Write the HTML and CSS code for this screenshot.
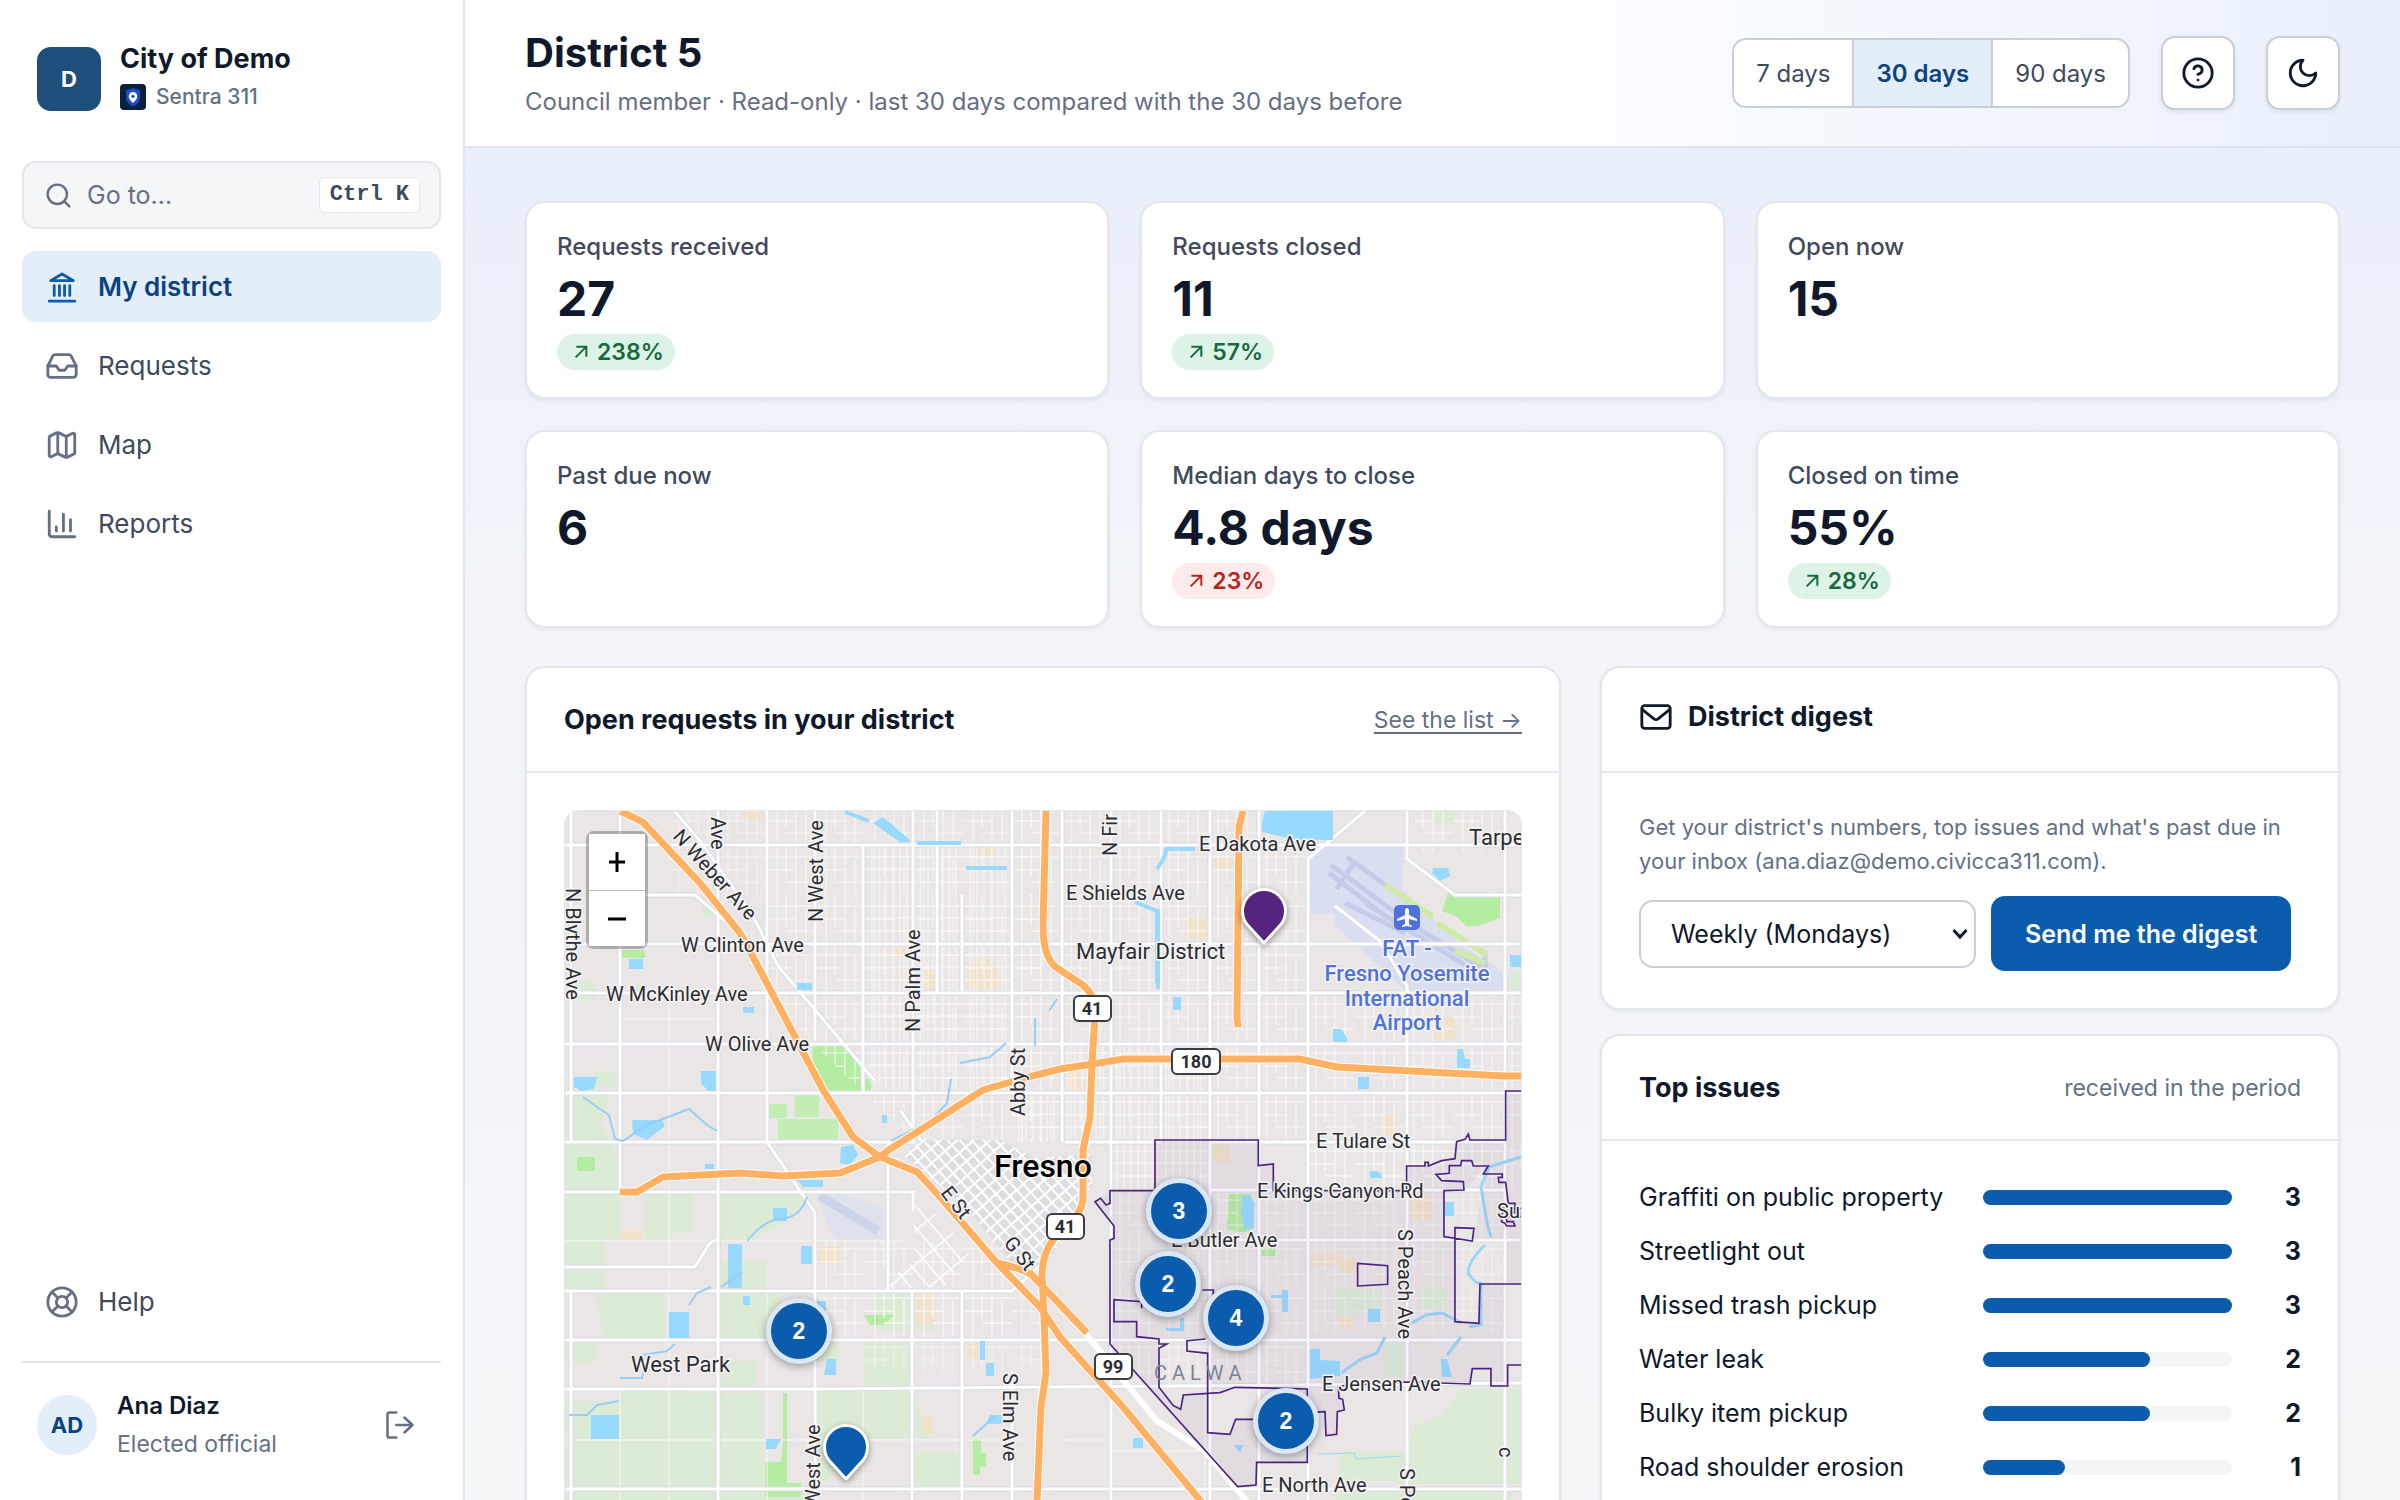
FILE: index.html
```html
<!DOCTYPE html>
<html lang="en">
<head>
<meta charset="utf-8">
<title>District 5 – Sentra 311</title>
<meta name="viewport" content="width=device-width, initial-scale=1">
<link rel="stylesheet" href="styles.css">
</head>
<body>
<div class="app">
  <aside class="sidebar">
    <div class="brand">
      <span class="brand-logo">D</span>
      <div class="brand-text">
        <strong class="brand-name">City of Demo</strong>
        <span class="brand-product">
          <svg class="brand-mark" viewBox="0 0 26 26" aria-hidden="true"><rect width="26" height="26" rx="4" fill="#0b1f3f"/><path d="M13 4l7 2.500v6.500c0 4.500-3 7.500-7 9.500-4-2-7-5-7-9.500V6.500z" fill="#1a4fc0"/><path d="M13 8a4.300 4.300 0 0 0-4.300 4.300c0 3.200 4.300 6.700 4.300 6.700s4.300-3.500 4.300-6.700A4.300 4.300 0 0 0 13 8z" fill="#fff"/><circle cx="13" cy="12.300" r="1.600" fill="#1a4fc0"/></svg>
          Sentra 311
        </span>
      </div>
    </div>

    <button class="goto" type="button">
      <svg class="goto-icon" viewBox="0 0 24 24" aria-hidden="true"><circle cx="11" cy="11" r="8"/><path d="m21 21-4.300-4.300"/></svg>
      <span>Go to...</span>
      <kbd>Ctrl K</kbd>
    </button>

    <nav class="nav" aria-label="Main">
      <a class="nav-item is-active" href="#district" aria-current="page">
        <svg viewBox="0 0 24 24" aria-hidden="true"><path d="M3 22h18M6.500 18v-7M10.200 18v-7M13.800 18v-7M17.500 18v-7M12 2.800 20 7.500H4z"/></svg>
        My district
      </a>
      <a class="nav-item" href="#requests">
        <svg viewBox="0 0 24 24" aria-hidden="true"><path d="M22 12h-6l-2 3h-4l-2-3H2"/><path d="M5.450 5.110 2 12v6a2 2 0 0 0 2 2h16a2 2 0 0 0 2-2v-6l-3.450-6.890A2 2 0 0 0 16.760 4H7.240a2 2 0 0 0-1.790 1.110z"/></svg>
        Requests
      </a>
      <a class="nav-item" href="#map">
        <svg viewBox="0 0 24 24" aria-hidden="true"><path d="M14.106 5.553a2 2 0 0 0 1.788 0l3.659-1.830A1 1 0 0 1 21 4.619v12.764a1 1 0 0 1-.553.894l-4.553 2.277a2 2 0 0 1-1.788 0l-4.212-2.106a2 2 0 0 0-1.788 0l-3.659 1.830A1 1 0 0 1 3 19.381V6.618a1 1 0 0 1 .553-.894l4.553-2.277a2 2 0 0 1 1.788 0zM15 5.764v15M9 3.236v15"/></svg>
        Map
      </a>
      <a class="nav-item" href="#reports">
        <svg viewBox="0 0 24 24" aria-hidden="true"><path d="M3 3v16a2 2 0 0 0 2 2h16M8 17v-3M13 17V5M18 17V9"/></svg>
        Reports
      </a>
    </nav>

    <div class="sidebar-foot">
      <a class="nav-item" href="#help">
        <svg viewBox="0 0 24 24" aria-hidden="true"><circle cx="12" cy="12" r="10"/><circle cx="12" cy="12" r="4"/><path d="m4.930 4.930 4.240 4.240M14.830 9.170l4.240-4.240M14.830 14.830l4.240 4.240M9.170 14.830l-4.240 4.240"/></svg>
        Help
      </a>
      <div class="user">
        <span class="avatar">AD</span>
        <div class="user-text">
          <span class="user-name">Ana Diaz</span>
          <span class="user-role">Elected official</span>
        </div>
        <button class="logout" type="button" aria-label="Sign out">
          <svg viewBox="0 0 24 24" aria-hidden="true"><path d="M9 2H3.500A1.500 1.500 0 0 0 2 3.500v17A1.500 1.500 0 0 0 3.500 22H9M9 12h13M15.500 6l6.500 6-6.500 6"/></svg>
        </button>
      </div>
    </div>
  </aside>

  <div class="main">
    <header class="topbar">
      <div>
        <h1>District 5</h1>
        <p class="subtitle">Council member · Read-only · last 30 days compared with the 30 days before</p>
      </div>
      <div class="tools">
        <div class="segmented" role="group" aria-label="Period">
          <button type="button">7 days</button>
          <button type="button" class="is-on" aria-pressed="true">30 days</button>
          <button type="button">90 days</button>
        </div>
        <button class="icon-btn" type="button" aria-label="Help">
          <svg viewBox="0 0 24 24" aria-hidden="true"><circle cx="12" cy="12" r="10"/><path d="M9.090 9a3 3 0 0 1 5.830 1c0 2-3 3-3 3M12 17h.010"/></svg>
        </button>
        <button class="icon-btn" type="button" aria-label="Dark mode">
          <svg viewBox="0 0 24 24" aria-hidden="true"><path d="M12 3a6 6 0 0 0 9 9 9 9 0 1 1-9-9Z"/></svg>
        </button>
      </div>
    </header>

    <main class="content">
      <section class="stats" aria-label="Key numbers">
        <article class="card stat"><h2>Requests received</h2><p class="value">27</p><span class="trend good"><svg viewBox="0 0 24 24" aria-hidden="true"><path d="M5 4h15v15M20 4 4 20"/></svg>238%</span></article>
        <article class="card stat"><h2>Requests closed</h2><p class="value">11</p><span class="trend good"><svg viewBox="0 0 24 24" aria-hidden="true"><path d="M5 4h15v15M20 4 4 20"/></svg>57%</span></article>
        <article class="card stat"><h2>Open now</h2><p class="value">15</p></article>
        <article class="card stat"><h2>Past due now</h2><p class="value">6</p></article>
        <article class="card stat"><h2>Median days to close</h2><p class="value">4.8 days</p><span class="trend bad"><svg viewBox="0 0 24 24" aria-hidden="true"><path d="M5 4h15v15M20 4 4 20"/></svg>23%</span></article>
        <article class="card stat"><h2>Closed on time</h2><p class="value">55%</p><span class="trend good"><svg viewBox="0 0 24 24" aria-hidden="true"><path d="M5 4h15v15M20 4 4 20"/></svg>28%</span></article>
      </section>

      <div class="columns">
        <section class="card panel">
          <header class="panel-head">
            <h2>Open requests in your district</h2>
            <a class="more" href="#list">See the list →</a>
          </header>
          <div class="panel-body">
            <div class="map">
              <svg class="map-art" viewBox="0 0 956 760" preserveAspectRatio="xMinYMin slice" role="img" aria-label="Street map of Fresno">
                <defs>
                  <pattern id="blocks" width="49" height="49" patternUnits="userSpaceOnUse" x="6" y="34">
                    <path d="M10 0V49M19 0V32M29 0V49M39 14V49M0 12H49M0 25H29M19 37H49" class="lane"/>
                  </pattern>
                  <pattern id="dense" width="49" height="49" patternUnits="userSpaceOnUse" x="6" y="34">
                    <path d="M7 0V49M14 0V49M21 0V49M28 0V49M35 0V49M42 0V49M0 12H49M0 24H49M0 37H49" class="lane"/>
                  </pattern>
                  <pattern id="downtown" width="9" height="11" patternUnits="userSpaceOnUse" patternTransform="rotate(-42)">
                    <rect width="9" height="11" fill="#dedee2"/><path d="M0 0H9M0 0V11" stroke="#fff" stroke-width="4" fill="none"/>
                  </pattern>
                  <pattern id="southwest" width="14" height="26" patternUnits="userSpaceOnUse" patternTransform="rotate(-40)">
                    <path d="M0 0H14M0 0V26" stroke="#fff" stroke-width="3" fill="none"/>
                  </pattern>
                </defs>
                <rect width="956" height="760" fill="#e9e6e5"/>

                <!-- farmland and parks -->
                <g fill="#dcebd6">
                  <path d="M0 282h46l-10 30 20 44 0 26H0zM0 382h55v48H0zM80 382h48v40h-20v7H80zM155 382h92l-28 30-32 16h-32zM0 430h40v48H0zM153 450h48v30h-48zM30 482h70v46H40zM155 482h60v46h-60zM0 532h30v20H0zM156 550h34v28h-34zM0 590h55v38H0zM56 580h60v48H56zM100 582h98v94h-98zM0 630h98v48H0zM250 580h98l16 48h-60l-50 48h-4zM350 640h50v38h-50zM0 680h250v80H0zM310 480h60v40h-60zM300 530h45v46h-45zM255 530h18v20h-18z"/>
                  <path d="M767 478h50v25h-50zM818 532h21v34h-21zM856 478h25v20h-25zM895 578h61v95H830l20-60 30-10zM855 640h80v30H775v-30zM767 680h180v80H820z"/>
                  <path d="M10 170h20v20H10zM137 92h18v14h-18zM72 172h8v18h-8zM30 260h20v16H30zM945 160h11v22h-11zM870 0h20v14h-20z"/>
                </g>
                <g fill="#b4eda2">
                  <path d="M57 139h23v8H57zM248 235h34l26 40-3 5h-42l-16-25zM12 346h18v14H12zM299 504h30l-10 10h-14zM218 582h4v90h14v14h-36v-35h16l2-20zM408 628h8v14h5v14h-6v8h-7z"/>
                  <path d="M883 82h52v25l-22 8-12 0-10-10-14-5zM664 383h22v38h-14l-10-3zM697 437h14v8h-16z"/>
                </g>
                <g fill="#c4edb4"><path d="M204 293h18v14h-18zM230 284h24v22h-24zM213 308h60v20h-60z"/></g>
                <g fill="#f0e2cb">
                  <path d="M178 1h22v7h-22zM412 35h18v10h-18zM405 155l15-10 12 12 5 20-35 1zM358 159h12v20h-12zM327 137h14v9h-14zM56 419h22v10H56zM252 435h23v18h-23zM351 482h20v32h-20zM402 532h12v18h-12zM358 605h10v18h-10z"/>
                  <path d="M649 46h19v12h-19zM621 108h21v20h-21zM868 206h22v22h-22zM502 260h14v22h-14zM647 332h18v20h-18zM746 443h30v12h-30zM776 448h16v14h-16zM846 383h22v26h-22zM775 505h14v14h-14zM848 526h16v8h-16zM818 305h12v20h-12z"/>
                </g>

                <!-- airports -->
                <path d="M746 36h92v44l60 55 46 30v14H840l-70-64v-12h-24z" fill="#d9def1"/>
                <path d="M250 383l22-1 46 14v32h-48z" fill="#dfe2ec"/>
                <g stroke="#c4cce9" stroke-width="5" fill="none"><path d="M766 54l84 62 66 40M782 46l74 54M764 62l60 46M780 92l60 30M790 50l-18 28M800 92l100 62M920 140v18"/><path d="M255 385l58 35" stroke-width="9" stroke="#cbd4e8"/></g>
                <g stroke="#cfeaa9" stroke-width="6" fill="none"><path d="M820 74l48 32M872 112l50 32M890 140l30 12"/></g>

                <!-- street grid -->
                <path d="M202 0H480V331H350L250 235 202 182z" fill="url(#blocks)"/>
                <path d="M300 34H447V282H300z" fill="url(#dense)"/>
                <path d="M447 0H743V331H447zM743 182H956V380H743zM850 0H940V40H850z" fill="url(#blocks)"/>
                <path d="M495 233H645V331H495zM447 282H497V331H447z" fill="url(#dense)"/>
                <path d="M546 331H645V380H546z" fill="url(#dense)"/>
                <path d="M546 380H743V578H546zM743 331H940V520H743z" fill="url(#blocks)" opacity=".7"/>
                <path d="M250 430H450V530H250z" fill="url(#blocks)"/>
                <path d="M104 0H202V84H104zM6 84H55V133H6zM300 480H480V560H300z" fill="url(#blocks)" opacity=".7"/>
                <path d="M55 578H55V760M104 182V760M202 480V760M298 578V760M640 578V760M55 208H153M0 430H340M0 629H460M546 640H640M500 629H546" class="lane"/>
                <path d="M355 329h78l38 18 56-4 0 30-50 90-26-6-50-60-62-52z" fill="url(#downtown)"/>
                <path d="M346 380l60 60-26 35-55 4-4-10 30-20z" fill="url(#southwest)"/>

                <g class="street-case"><path id="streets" d="M6 0V331M55 0V380M153 0V133M153 133V760M202 0V331L250 402V480M250 0V230M250 480V760M298 34V282M348 0V330M372 0V182M397 180V84M447 0V282M0 34H956M55 84H130L160 110M0 133H956M0 182H956M0 233H956M0 282H956M0 331H350M0 381H350M0 480H447L480 450M0 529H956M0 578H260M260 578L956 572M0 678H956M323 331V480M348 380V400M347 480V760M397 480V760M447 560V760M497 0V331M546 0V760M596 0V331M645 0V760M694 0V760M743 48V760M842 0V48L890 84H956M842 182V760M940 0V760M645 379H940M645 429H956M645 331H940M770 95L815 130 842 175 842 230M110 1 135 30 188 105 213 155 310 270M336 300L356 330M6 480V760M0 456H130L145 432 153 428M743 48L800 0M596 331H500M940 282V480"/></g>
                <use href="#streets" class="street"/>
                <path d="M520 522 592 610 640 640 740 760" fill="none" stroke="#fff" stroke-width="6"/>

                <!-- water -->
                <g fill="#98daff">
                  <path d="M308 12l10-6 28 24-10 2zM64 148h14v10H64zM232 172h15v7h-15zM178 196h11v6h-11zM9 266h23l-3 12-12 2-8-4zM136 260h15v20h-8l-7-8zM67 309h30l3 6-18 14-14-6zM276 336l12-2 5 10-8 10-10-2zM232 369h26v7h-20zM208 397h14v13h-14zM163 433h14v44h-14zM236 435h11v18h-11zM104 501h20v26h-20zM178 485h7v9h-7zM26 604h28v24H26zM201 628h15l-5 10h-10zM262 548h9v16h-12zM415 530h5v19h-5zM421 552h8v13h-8zM425 604l12 0v9h-16zM317 304h5v8h-5zM140 353h9v5h-9zM252 490h9v10h-9z"/>
                  <path d="M700 0h68v29h-37l-34-8 0-10zM868 57l15 0 2 8-10 5-8-8zM608 186h8v13h-8zM768 218h8l6 9v4h-14zM892 238h6l2 10h5v9h-13zM793 266h11v12h-11zM945 144h11v12h-11zM677 385h8l4 6v26l-9 2-4-16zM805 360h8l4 4v3h-12zM880 391h9v14h-9zM717 479h6v22h-6zM706 484h12v3h-12zM803 498h12v13h-12zM745 538l10 0 0 11 20 1v15l-30 3zM876 548l6 0 5 18h-10zM669 634h9l-3 8zM568 627h10v10h-10zM601 517h14v-10h4v13h-18z"/>
                </g>
                <g fill="none" stroke="#98daff" stroke-width="4"><path d="M280 1l24 9M352 32h44M401 57h41M592 58q12-18 8-20h30M570 91l22 9V172M593 98V178"/></g>
                <g fill="none" stroke="#98cdf5" stroke-width="2"><path d="M18 286l14 10 12 8 6 24 8 2 24-16 42-16 18 16 10 6M326 330l40-20 16-18 4-24M395 252l30-6 16-14M470 235v-28M484 200l8-12M182 430q18-22 34-22 20-2 26-22M156 476l20-14M124 494l8-12 14-6M78 544l24-4 8-7M55 567h22l2-8M4 604h18l10-10 22-4M408 625l22-20"/></g>
                <g fill="none" stroke="#9ad6f8" stroke-width="3"><path d="M956 346l-32 10-8 20 6 36 4 14M920 434q-20 20-16 30l8 8 4 0v42l-12 2M847 512l14-8 16-2 20 10M776 562l20-14 16-6 8-16M896 526l-14 18"/><path d="M753 643l36-1 2 6 46-3" stroke-width="1"/></g>

                <!-- highways -->
                <g class="highway-case"><path id="hwy" d="M55 0 78 11 135 72 175 122 188 146 228 222 258 279 288 326 315 346 352 361 375 386 432 452 475 496 495 526 558 596 692 758M55 381h17l26-15 77-4 43 3 57-3 40-16 10-8 40-25 53-34 57-16 20-5 33-5 30-5H735l37 8 166 9h18M481 0 478 115Q478 150 495 159L518 174Q532 186 530 205L527 252 525 306 518 339V389Q516 402 505 411L488 429Q478 442 477 462L479 506 481 562 476 596 472 689V760M678 0 674 16 672 206 673 216M432 452Q452 456 466 463L522 522"/></g>
                <use href="#hwy" class="highway"/>

                <!-- district boundary -->
                <g transform="translate(475 329) scale(.3333)">
                  <path fill="#6b2b90" fill-opacity=".05" fill-rule="evenodd" d="M345 0H655V77L700 72V152H1100V78H1205L1245 56 1250 5 1397 0V-147H1445V432H1320L1317 550 1245 545V263L1212 290V152L1272 150 1345 78 1300 300 1400 300V675H1403V738H1353V686H1297L1290 732 1100 726 895 738 913 810 892 815 890 883 858 887 855 815 802 817V967H650L648 1035 593 1040 210 612V300L222 258 165 185 210 152H345zM357 597H500L503 878 570 883 587 838H700L800 747 585 742 430 765 422 808 357 742z"/>
                  <path class="boundary" d="M1445-147H1397V0H1290L1285-18 1275-2 1250 5 1245 56 1205 62 1165 78V67H1155V78H1100V152H700V72L655 77V0H345V152H210V190L198 195 182 175 165 185 222 258V295L210 300V612L593 1040 648 1035 650 967H802V747L585 742 540 758 430 765 422 808 400 797 357 742V625L380 612H357V597L290 590V545H222V479L305 485V505M487 450H520V480M497 597L441 602V633L503 640V878L570 883 587 838H660M820 817L855 815 858 887 890 883 892 815 913 810 908 778 897 775 895 738 1100 726 1290 732 1297 686H1353V738H1403V675H1445M1445 432H1320L1317 550 1245 545V263L1302 265 1297 303 1212 290V152L1272 150 1270 125 1205 122 1188 103 1228 100V77H1262L1265 62H1295L1300 78H1345L1330 102H1387V112H1375L1377 127H1397L1405 190H1425V218H1385V245L1395 250 1400 258H1425L1420 245H1400V205M1385 205H1445V230H1385M953 370L1043 377V433L953 438z"/>
                </g>

                <!-- labels -->
                <g class="label">
                  <text x="116" y="141">W Clinton Ave</text>
                  <text x="41" y="190">W McKinley Ave</text>
                  <text x="140" y="240">W Olive Ave</text>
                  <text x="634" y="40">E Dakota Ave</text>
                  <text x="501" y="89">E Shields Ave</text>
                  <text x="751" y="337">E Tulare St</text>
                  <text x="692" y="387">E Kings Canyon Rd</text>
                  <text x="606" y="436">E Butler Ave</text>
                  <text x="757" y="580">E Jensen Ave</text>
                  <text x="697" y="681">E North Ave</text>
                  <text transform="translate(146 6) rotate(90)">Ave</text>
                  <text transform="translate(107 26) rotate(48)">N Weber Ave</text>
                  <text transform="translate(258 111) rotate(-90)">N West Ave</text>
                  <text transform="translate(355 221) rotate(-90)">N Palm Ave</text>
                  <text transform="translate(460 305) rotate(-90)">Abby St</text>
                  <text transform="translate(552 45) rotate(-90)">N Fir</text>
                  <text transform="translate(1 77) rotate(90)">N Blythe Ave</text>
                  <text transform="translate(375 382) rotate(52)">E St</text>
                  <text transform="translate(438 432) rotate(52)">G St</text>
                  <text transform="translate(438 562) rotate(90)">S Elm Ave</text>
                  <text transform="translate(255 696) rotate(-90)">West Ave</text>
                  <text transform="translate(833 418) rotate(90)">S Peach Ave</text>
                  <text transform="translate(835 657) rotate(90)">S Peach</text>
                  <text transform="translate(934 636) rotate(90)">c</text>
                  <text x="932" y="407">Su</text>
                </g>
                <g class="label place">
                  <text x="66" y="561">West Park</text>
                  <text x="511" y="148">Mayfair District</text>
                  <text x="904" y="34">Tarpey</text>
                </g>
                <text class="label city" x="429" y="366">Fresno</text>
                <text class="label hamlet" x="589" y="569">C A L W A</text>
                <g class="label airport" text-anchor="middle">
                  <text x="842" y="145">FAT -</text>
                  <text x="842" y="170">Fresno Yosemite</text>
                  <text x="842" y="195">International</text>
                  <text x="842" y="219">Airport</text>
                </g>
                <rect x="829" y="94" width="26" height="25" rx="5" fill="#4f73db"/>
                <path d="M842 97c1.500 0 2 2 2 3v4l8 4v2l-8-2v5l3 2v1l-5-1-5 1v-1l3-2v-5l-8 2v-2l8-4v-4c0-1 .5-3 2-3z" fill="#fff"/>
                <g class="shield" text-anchor="middle">
                  <rect x="509" y="185" width="37" height="25" rx="5"/><text x="527" y="204">41</text>
                  <rect x="607" y="238" width="48" height="25" rx="5"/><text x="631" y="257">180</text>
                  <rect x="482" y="403" width="37" height="25" rx="5"/><text x="500" y="422">41</text>
                  <rect x="530" y="543" width="37" height="25" rx="5"/><text x="548" y="562">99</text>
                </g>
              </svg>

              <div class="zoom">
                <button type="button" aria-label="Zoom in"><svg viewBox="0 0 20 20" aria-hidden="true"><path d="M10 0v20M2 10h16"/></svg></button>
                <button type="button" aria-label="Zoom out"><svg viewBox="0 0 20 20" aria-hidden="true"><path d="M1 10h18"/></svg></button>
              </div>
              <button type="button" class="cluster" style="left:614px;top:400px">3</button>
              <button type="button" class="cluster" style="left:603px;top:473px">2</button>
              <button type="button" class="cluster" style="left:671px;top:507px">4</button>
              <button type="button" class="cluster" style="left:721px;top:610px">2</button>
              <button type="button" class="cluster" style="left:234px;top:520px">2</button>
              <button type="button" class="pin pin-purple" style="left:699px;top:132px" aria-label="Request"><svg viewBox="0 0 48 60" aria-hidden="true"><path d="M24 57 8.500 40a21.500 21.500 0 1 1 31 0z"/></svg></button>
              <button type="button" class="pin" style="left:281px;top:668px" aria-label="Request"><svg viewBox="0 0 48 60" aria-hidden="true"><path d="M24 57 8.500 40a21.500 21.500 0 1 1 31 0z"/></svg></button>
            </div>
          </div>
        </section>

        <div class="side">
          <section class="card panel">
            <header class="panel-head digest-head">
              <h2><svg viewBox="0 0 24 24" aria-hidden="true"><rect x="2" y="4" width="20" height="16" rx="2"/><path d="m2 6.500 8.500 6.800a2.500 2.500 0 0 0 3 0L22 6.500"/></svg>District digest</h2>
            </header>
            <div class="panel-body">
              <p class="hint">Get your district's numbers, top issues and what's past due in your inbox (ana.diaz@demo.civicca311.com).</p>
              <form class="digest-form">
                <div class="select">
                  <select aria-label="Digest frequency"><option>Weekly (Mondays)</option><option>Monthly</option><option>Off</option></select>
                  <svg viewBox="0 0 16 12" aria-hidden="true"><path d="m1.500 2 6.500 7 6.500-7"/></svg>
                </div>
                <button class="primary" type="button">Send me the digest</button>
              </form>
            </div>
          </section>

          <section class="card panel">
            <header class="panel-head">
              <h2>Top issues</h2>
              <span class="note">received in the period</span>
            </header>
            <div class="panel-body">
              <ul class="issues">
                <li><span>Graffiti on public property</span><span class="bar"><i style="width:100%"></i></span><b>3</b></li>
                <li><span>Streetlight out</span><span class="bar"><i style="width:100%"></i></span><b>3</b></li>
                <li><span>Missed trash pickup</span><span class="bar"><i style="width:100%"></i></span><b>3</b></li>
                <li><span>Water leak</span><span class="bar"><i style="width:67%"></i></span><b>2</b></li>
                <li><span>Bulky item pickup</span><span class="bar"><i style="width:67%"></i></span><b>2</b></li>
                <li><span>Road shoulder erosion</span><span class="bar"><i style="width:33%"></i></span><b>1</b></li>
              </ul>
            </div>
          </section>
        </div>
      </div>
    </main>
  </div>
</div>
</body>
</html>
```
FILE: styles.css
```css
:root {
  --ink: #10182b;
  --ink-soft: #3f4a5c;
  --muted: #667085;
  --line: #e3e6ea;
  --line-strong: #c9ced9;
  --blue: #0b5cad;
  --blue-dark: #0a4480;
  --blue-soft: #e4edfa;
}

* { box-sizing: border-box; }

body {
  margin: 0;
  font-family: Inter, "Liberation Sans", sans-serif;
  font-size: 25px;
  color: var(--ink);
}

h1, h2, p, ul { margin: 0; padding: 0; }
button, select { font: inherit; color: inherit; cursor: pointer; }
svg { display: block; flex: none; }

.app {
  display: grid;
  grid-template-columns: 465px minmax(0, 1fr);
  grid-template-rows: minmax(0, 1fr);
  height: 100vh;
  overflow: hidden;
}

/* Sidebar */
.sidebar {
  display: flex;
  flex-direction: column;
  padding: 40px 22px 45px;
  border-right: 2px solid var(--line);
  background: #fff;
}

.brand {
  display: flex;
  flex: none;
  align-items: center;
  gap: 19px;
  height: 78px;
  margin-bottom: 43px;
  padding-left: 15px;
}
.brand-logo {
  display: grid;
  place-items: center;
  width: 64px;
  height: 64px;
  border-radius: 14px;
  background: #1e4e7a;
  color: #fff;
  font-size: 22px;
  font-weight: 700;
}
.brand-text { display: grid; gap: 2px; padding-bottom: 5px; }
.brand-name { font-size: 27px; line-height: 38px; font-weight: 700; }
.brand-product {
  display: flex;
  align-items: center;
  gap: 10px;
  font-size: 21px;
  line-height: 34px;
  font-weight: 500;
  color: var(--muted);
}
.brand-mark { width: 26px; height: 26px; }

.goto {
  display: flex;
  flex: none;
  align-items: center;
  gap: 14px;
  height: 68px;
  margin-bottom: 22px;
  padding: 0 19px 0 20px;
  border: 2px solid var(--line);
  border-radius: 14px;
  background: #f5f6f8;
  color: var(--muted);
  text-align: left;
}
.goto-icon { width: 29px; height: 29px; fill: none; stroke: currentColor; stroke-width: 2; stroke-linecap: round; }
.goto kbd {
  margin-left: auto;
  padding: 0 10px;
  border: 1px solid var(--line);
  border-radius: 6px;
  background: #fff;
  color: var(--ink-soft);
  font: 700 22px/34px "Liberation Mono", monospace;
}

.nav { display: grid; gap: 8px; }
.nav-item {
  display: flex;
  align-items: center;
  gap: 19px;
  height: 71px;
  padding: 0 23px;
  border-radius: 14px;
  color: var(--ink-soft);
  font-size: 26px;
  text-decoration: none;
}
.nav-item svg {
  width: 34px;
  height: 34px;
  fill: none;
  stroke: var(--muted);
  stroke-width: 2;
  stroke-linecap: round;
  stroke-linejoin: round;
}
.nav-item.is-active { background: var(--blue-soft); color: var(--blue-dark); font-weight: 600; }
.nav-item.is-active svg { stroke: var(--blue); }

.sidebar-foot { margin-top: auto; }
.user {
  display: flex;
  align-items: center;
  gap: 20px;
  margin-top: 24px;
  padding: 32px 26px 0 15px;
  border-top: 2px solid var(--line);
}
.avatar {
  display: grid;
  place-items: center;
  width: 60px;
  height: 60px;
  border-radius: 50%;
  background: var(--blue-soft);
  color: var(--blue-dark);
  font-size: 22px;
  font-weight: 700;
}
.user-text { display: grid; height: 60px; align-content: center; line-height: 38px; }
.user-name { font-size: 24px; font-weight: 600; }
.user-role { font-size: 23px; color: var(--muted); }
.logout { margin-left: auto; padding: 0; border: 0; background: none; color: var(--muted); }
.logout svg { width: 30px; height: 30px; fill: none; stroke: currentColor; stroke-width: 2; stroke-linecap: round; stroke-linejoin: round; }

/* Main column */
.main {
  display: flex;
  flex-direction: column;
  min-width: 0;
  background: linear-gradient(#e9effb 146px, #ebf0f9 300px, #f3f5f9 640px, #f4f6f8);
}
.topbar {
  display: flex;
  flex: none;
  align-items: center;
  justify-content: space-between;
  height: 148px;
  padding: 0 60px;
  border-bottom: 2px solid #e0e5ed;
  background: linear-gradient(90deg, #fff 50%, #f2f7fe 78%, #e9effb);
}
h1 { font-size: 40px; line-height: 58px; font-weight: 700; }
.subtitle { font-size: 24px; line-height: 40px; color: var(--muted); }

.tools { display: flex; align-items: center; gap: 31px; }
.segmented {
  display: flex;
  height: 70px;
  overflow: hidden;
  border: 2px solid var(--line-strong);
  border-radius: 14px;
  background: #fff;
}
.segmented button {
  padding: 0 22px;
  border: 0;
  background: none;
  color: var(--ink-soft);
  font-size: 24px;
}
.segmented button + button { border-left: 2px solid var(--line-strong); }
.segmented .is-on { background: var(--blue-soft); color: var(--blue-dark); font-weight: 600; }
.icon-btn {
  display: grid;
  place-items: center;
  width: 74px;
  height: 74px;
  padding: 0;
  border: 2px solid var(--line-strong);
  border-radius: 14px;
  background: #fff;
  box-shadow: 0 2px 4px rgb(16 24 43 / .08);
}
.icon-btn svg { width: 34px; height: 34px; fill: none; stroke: currentColor; stroke-width: 2; stroke-linecap: round; stroke-linejoin: round; }

.content { display: grid; gap: 38px; padding: 53px 60px; }
.card {
  border: 2px solid var(--line);
  border-radius: 20px;
  background: #fff;
  box-shadow: 0 2px 4px rgb(16 24 43 / .06);
}

.stats { display: grid; grid-template-columns: repeat(3, minmax(0, 1fr)); gap: 31px; }
.stat {
  display: flex;
  flex-direction: column;
  align-items: flex-start;
  height: 198px;
  padding: 27px 30px;
}
.stat h2 { font-size: 24px; line-height: 34px; font-weight: 500; color: var(--ink-soft); }
.value { font-size: 48px; line-height: 70px; font-weight: 700; }
.trend {
  display: flex;
  align-items: center;
  gap: 8px;
  height: 37px;
  padding: 0 11px 0 16px;
  border-radius: 19px;
  font-size: 23px;
  font-weight: 600;
}
.trend svg { width: 16px; height: 16px; fill: none; stroke: currentColor; stroke-width: 3; }
.good { background: #dcf3e5; color: #17693f; }
.bad { background: #fdeaea; color: #b3261e; }

.columns { display: grid; grid-template-columns: minmax(0, 14fr) minmax(0, 10fr); gap: 39px; align-items: start; }
.side { display: grid; gap: 24px; }
.panel-head {
  display: flex;
  align-items: center;
  justify-content: space-between;
  height: 105px;
  padding: 0 37px;
  border-bottom: 2px solid var(--line);
}
.digest-head { padding-bottom: 6px; }
.panel-head h2 { display: flex; align-items: center; gap: 15px; font-size: 27px; font-weight: 700; }
.panel-head h2 svg { width: 34px; height: 34px; fill: none; stroke: currentColor; stroke-width: 2; stroke-linejoin: round; }
.more, .note { font-size: 23px; color: var(--muted); }
.more { text-underline-offset: 4px; }
.panel-body { padding: 37px; }

/* Digest */
.hint { font-size: 22px; line-height: 34px; color: var(--muted); }
.digest-form { display: flex; align-items: center; gap: 15px; margin-top: 18px; }
.select { position: relative; }
.select select {
  width: 337px;
  height: 68px;
  padding: 0 30px;
  border: 2px solid var(--line-strong);
  border-radius: 14px;
  background: #fff;
  appearance: none;
}
.select svg { position: absolute; right: 8px; top: 28px; width: 16px; height: 12px; fill: none; stroke: var(--ink); stroke-width: 3; pointer-events: none; }
.primary {
  height: 75px;
  padding: 0 34px;
  border: 0;
  border-radius: 14px;
  background: var(--blue);
  color: #fff;
  font-weight: 600;
  white-space: nowrap;
}

/* Top issues */
.issues { display: grid; gap: 16px; list-style: none; }
.issues li { display: grid; grid-template-columns: 1fr 249px 54px; column-gap: 15px; align-items: center; line-height: 38px; }
.bar { height: 15px; border-radius: 8px; background: #f3f5f7; }
.bar i { display: block; height: 100%; border-radius: 8px; background: var(--blue); }
.issues b { text-align: right; font-weight: 700; }

/* Map */
.map {
  position: relative;
  height: 760px;
  overflow: hidden;
  border: 1px solid var(--line);
  border-radius: 14px;
}
.map-art { width: 100%; height: 100%; }
.lane { fill: none; stroke: #f8f7f6; stroke-width: 1; }
.street { fill: none; stroke: #fff; stroke-width: 3; }
.street-case { fill: none; stroke: #d9dbe6; stroke-width: 5; }
.highway-case { fill: none; stroke: #fff; stroke-width: 9; }
.highway { fill: none; stroke: #ffb061; stroke-width: 7; }
.boundary { fill: none; stroke: #4d2380; stroke-width: 5; }
.label {
  fill: #2b2d33;
  stroke: #f4f2f1;
  stroke-width: 3px;
  paint-order: stroke;
  font: 400 20px Roboto, sans-serif;
}
.place { font-size: 22px; }
.city { fill: #000; font-size: 32px; font-weight: 500; }
.hamlet { fill: #7f8494; stroke: none; font-size: 20px; }
.airport { fill: #4f73db; font-size: 22px; font-weight: 500; }
.shield rect { fill: #fff; stroke: #3a3d44; stroke-width: 2; }
.shield text { fill: #2b2d33; font: 700 18px Roboto, sans-serif; }

.zoom {
  position: absolute;
  left: 21px;
  top: 20px;
  display: grid;
  width: 62px;
  border: 3px solid rgb(0 0 0 / .25);
  border-radius: 8px;
  background-clip: padding-box;
}
.zoom button { display: grid; place-items: center; height: 56px; padding: 0; border: 0; background: #fff; }
.zoom button + button { border-top: 1px solid #bbb; }
.zoom svg { width: 20px; height: 20px; fill: none; stroke: #000; stroke-width: 3; }

.cluster {
  position: absolute;
  width: 66px;
  height: 66px;
  margin: -33px 0 0 -33px;
  padding: 0;
  border: 5px solid #dce7f6;
  border-radius: 50%;
  background: var(--blue);
  box-shadow: 0 2px 8px rgb(0 0 0 / .35);
  color: #fff;
  font: 700 23px "Liberation Sans", sans-serif;
}
.pin { position: absolute; width: 48px; height: 60px; margin: -57px 0 0 -24px; padding: 0; border: 0; background: none; }
.pin svg { width: 48px; height: 60px; overflow: visible; fill: var(--blue); stroke: #fff; stroke-width: 3; stroke-linejoin: round; filter: drop-shadow(0 2px 3px rgb(0 0 0 / .4)); }
.pin-purple svg { fill: #55247f; }
```
